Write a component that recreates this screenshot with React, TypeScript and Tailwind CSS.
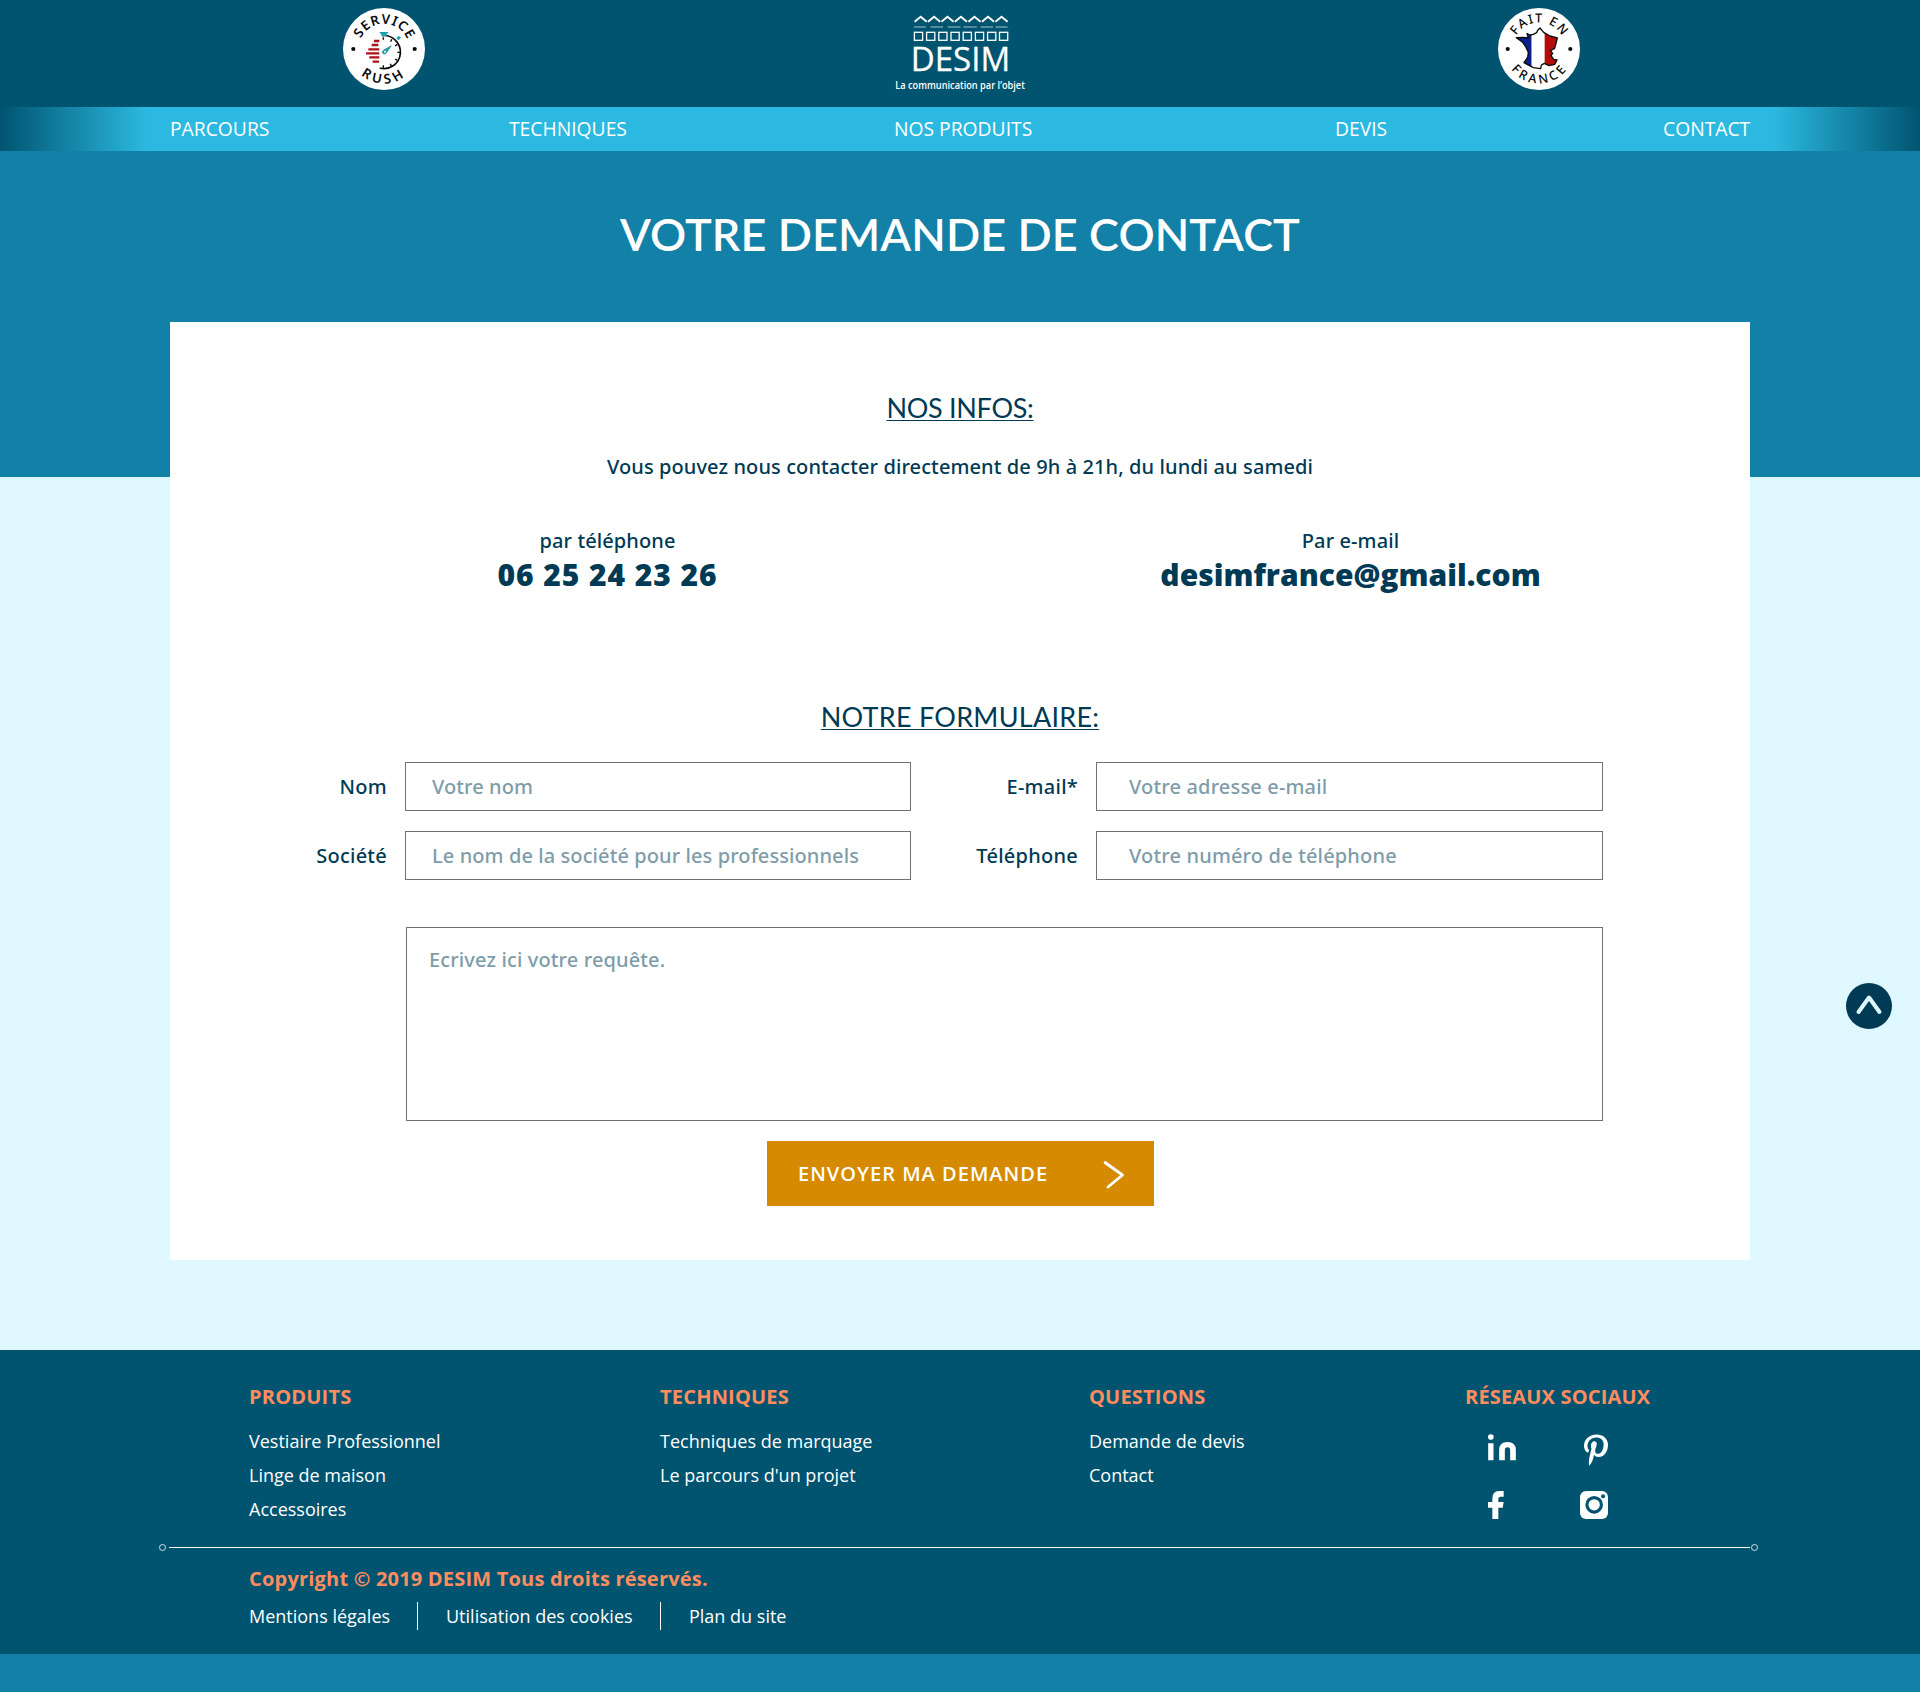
import React from "react";
import { FaPinterestP } from "react-icons/fa";

function RushBadge() {
  return (
    <svg width="82" height="82" viewBox="0 0 82 82" className="mt-2">
      <circle cx="41" cy="41" r="41" fill="#fff" />
      <defs>
        <path id="rush-top" d="M15.700 41a25.300 25.300 0 0 1 50.600 0" />
        <path id="rush-bottom" d="M6.500 41a34.500 34.500 0 0 0 69 0" />
      </defs>
      <g fontFamily="'Noto Sans', sans-serif" fontWeight="600" fontSize="13.300" fill="#0a0a0a" textAnchor="middle">
        <text letterSpacing="1"><textPath href="#rush-top" startOffset="51%">SERVICE</textPath></text>
        <text letterSpacing="3.6"><textPath href="#rush-bottom" startOffset="50%">RUSH</textPath></text>
      </g>
      <circle cx="10.3" cy="41" r="2.1" fill="#0a0a0a" />
      <circle cx="71.7" cy="41" r="2.1" fill="#0a0a0a" />
      <g transform="translate(-23 -8) scale(.33333)" fill="none">
        <path d="M186 107a49.500 49.500 0 1 1-7 97" stroke="#0a0a0a" strokeWidth="5" />
        <path d="M190 112v7M215 118l-3 7M232 133l-7 5M240 157h-8M232 181l-7-4M214 198l-3-7M190 204v-8" stroke="#0a0a0a" strokeWidth="4" />
        <path d="M177 96h29l-6 7v5h-16v-5z" fill="#1c9fae" />
        <path d="M229 115l7-8 7 6-7 8z" fill="#1c9fae" />
        <path d="M214 137l-15 22q-6 6-11 1-4-5 3-10z" fill="#1c9fae" stroke="#0b6f7c" strokeWidth="1.500" />
        <circle cx="195" cy="155" r="3" fill="#fff" />
        <path d="M162 123h16M155 135h20M145 148h33M138 160h40M148 172h30M158 185h19" stroke="#ad1218" strokeWidth="7" />
      </g>
    </svg>
  );
}

function FranceBadge() {
  const outline =
    "M180 84L191 97 207 107 232 114 228 130 224 145 211 152 218 160 213 167 221 178 231 180 224 193 207 197 193 190 184 195 182 206 160 203 132 188 143 172 145 157 137 140 128 127 109 113 130 112 145 114 141 101 150 105 160 103 170 98 173 91Z";
  return (
    <svg width="82" height="82" viewBox="0 0 82 82" className="mt-2">
      <circle cx="41" cy="41" r="41" fill="#fff" />
      <defs>
        <path id="fr-top" d="M14.500 41a26.500 26.500 0 0 1 53 0" />
        <path id="fr-bottom" d="M6.500 41a34.500 34.500 0 0 0 69 0" />
        <clipPath id="fr-clip"><path d={outline} /></clipPath>
      </defs>
      <g fontFamily="'Noto Sans', sans-serif" fontWeight="500" fontSize="12.600" fill="#0a0a0a" textAnchor="middle">
        <text letterSpacing="1.45"><textPath href="#fr-top" startOffset="51%">FAIT EN</textPath></text>
        <text letterSpacing="3.2"><textPath href="#fr-bottom" startOffset="51%">FRANCE</textPath></text>
      </g>
      <circle cx="9.700" cy="41" r="2.1" fill="#0a0a0a" />
      <circle cx="72.300" cy="41" r="2.1" fill="#0a0a0a" />
      <g transform="translate(-18 -8) scale(.33333)">
        <g clipPath="url(#fr-clip)">
          <path d="M100 80h55v130h-55z" fill="#0c1f8f" />
          <path d="M155 80h39v130h-39z" fill="#fff" />
          <path d="M194 80h45v130h-45z" fill="#b50b0b" />
        </g>
        <path d={outline} fill="none" stroke="#0a0a0a" strokeWidth="4" strokeLinejoin="round" />
      </g>
    </svg>
  );
}

const roofs = [920.2, 933.6, 947, 960.4, 974, 987.5, 1001];
const windows = [913.9, 926.1, 938.3, 950.5, 962.7, 974.9, 987.1, 999];

function Logo() {
  return (
    <svg width="132" height="107" viewBox="895.500 0 132 107" className="overflow-visible">
      <g fill="none" stroke="#fff">
        {roofs.map((x) => (
          <path key={x} d={`M${x - 6.1} 21.800L${x} 16.800 ${x + 6.1} 21.800`} strokeWidth="1.900" />
        ))}
        <path d="M913.500 27h12M930 27h12.500M947 27h13M963 27h13.500M980 27h12.500M995 27h12" strokeWidth="1.100" opacity=".65" />
        {windows.map((x) => (
          <rect key={x} x={x} y="32.300" width="8.200" height="8" strokeWidth="1.300" />
        ))}
      </g>
      <text x="910.200" y="71" fill="#fff" stroke="#fff" strokeWidth=".3" fontFamily="'Open Sans', sans-serif" fontSize="33.500" textLength="99.500" lengthAdjust="spacingAndGlyphs">DESIM</text>
      <text x="894.800" y="88.700" fill="#fff" fontFamily="'Open Sans', sans-serif" fontWeight="600" fontSize="11.300" textLength="129.500" lengthAdjust="spacingAndGlyphs">La communication par l’objet</text>
    </svg>
  );
}

function Field({ label, placeholder, wide }: { label: string; placeholder: string; wide?: boolean }) {
  return (
    <>
      <label className="pr-[18px] text-right leading-7 tracking-[0.25px]">{label}</label>
      <input
        placeholder={placeholder}
        className={`${wide ? "pl-8 tracking-[0.16px]" : "pl-[26px] tracking-[0.09px]"} h-[49px] w-full border border-[#707070] bg-white leading-7 outline-none placeholder:text-[#7f9ca9]`}
      />
    </>
  );
}

function FooterColumn({ title, links }: { title: string; links: string[] }) {
  return (
    <div>
      <h3 className="text-xl leading-7 font-bold tracking-[0.2px] text-[#ff8c5f]">{title}</h3>
      <ul className="mt-[13px] text-lg leading-[34px]">
        {links.map((l) => (
          <li key={l}>{l}</li>
        ))}
      </ul>
    </div>
  );
}

function LinkedinIcon() {
  return (
    <svg width="28" height="27" viewBox="144.500 253 84 81" fill="#fff">
      <circle cx="153" cy="262" r="8.500" />
      <path d="M145 281h16v51h-16zM178 332v-31q0-24 25-24t25 24v31h-17v-31q0-8-8-8t-8 8v31z" />
    </svg>
  );
}

function FacebookIcon() {
  return (
    <svg width="16" height="28" viewBox="143 423 48 84" fill="#fff">
      <path d="M156 507v-34h-13v-17h13v-10q0-23 20-23h14v17h-9q-7 0-7 7v9h16l-3 17h-13v34z" />
    </svg>
  );
}

function InstagramIcon() {
  return (
    <svg width="28" height="28" viewBox="418 424 85 85" className="justify-self-end">
      <rect x="418" y="424" width="85" height="85" rx="18" fill="#fff" />
      <circle cx="461" cy="466" r="22" fill="#fff" stroke="#005470" strokeWidth="9.500" />
      <circle cx="488" cy="440" r="6" fill="#005470" />
    </svg>
  );
}

export default function App() {
  return (
    <div className="relative h-[1692px] w-[1920px] bg-[#1380a8] font-['Open_Sans',sans-serif] text-white">
      <header className="flex h-[107px] justify-between bg-[#005470] pr-[340px] pl-[343px]">
        <RushBadge />
        <Logo />
        <FranceBadge />
      </header>

      <nav className="grid h-11 grid-cols-[339px_385px_441px_328px_auto] bg-[linear-gradient(90deg,#005470_0,#2bb9e1_147px,#2bb9e1_1773px,#005470_1920px)] pl-[170px] text-[19.3px] leading-[43px]">
        <a>PARCOURS</a>
        <a>TECHNIQUES</a>
        <a>NOS PRODUITS</a>
        <a>DEVIS</a>
        <a>CONTACT</a>
      </nav>

      <main className="h-[1199px] bg-[linear-gradient(#1380a8_326px,#dff7ff_326px)] pt-14 font-['Noto_Sans','Open_Sans',sans-serif]">
        <h1 className="h-[115px] text-center font-[Lato] text-[45px] leading-[54px] font-semibold tracking-[0.08px]">VOTRE DEMANDE DE CONTACT</h1>

        <section className="mx-auto h-[938px] w-[1580px] bg-white pt-[70px] text-xl font-medium tracking-[0.1px] text-[#003a54]">
          <h2 className="text-center font-[Lato] text-[27px] leading-8 font-normal tracking-[-0.3px] underline decoration-1 underline-offset-2">NOS INFOS:</h2>
          <p className="mt-[29px] text-center leading-7">Vous pouvez nous contacter directement de 9h à 21h, du lundi au samedi</p>
          <div className="mt-[46px] grid grid-cols-[875px_611px] text-center leading-7">
            <div>
              <p>par téléphone</p>
              <p className="font-['Open_Sans'] text-3xl leading-10 font-extrabold tracking-[0.92px]">06 25 24 23 26</p>
            </div>
            <div>
              <p>Par e-mail</p>
              <p className="font-['Open_Sans'] text-3xl leading-10 font-extrabold tracking-normal">desimfrance@gmail.com</p>
            </div>
          </div>

          <h2 className="mt-[106px] text-center font-[Lato] text-[27px] leading-8 font-normal tracking-[0.25px] underline decoration-1 underline-offset-2">NOTRE FORMULAIRE:</h2>
          <form className="mt-[29px]">
            <div className="grid grid-cols-[235px_506px_185px_507px] items-center gap-y-5">
              <Field label="Nom" placeholder="Votre nom" />
              <Field label="E-mail*" placeholder="Votre adresse e-mail" wide />
              <Field label="Société" placeholder="Le nom de la société pour les professionnels" />
              <Field label="Téléphone" placeholder="Votre numéro de téléphone" wide />
            </div>
            <textarea
              placeholder="Ecrivez ici votre requête."
              className="mt-[47px] ml-[236px] block h-[194px] w-[1197px] resize-none border border-[#707070] pt-[18px] pl-[22px] leading-7 tracking-[0.13px] outline-none placeholder:text-[#7f9ca9]"
            />
            <button type="button" className="mt-5 ml-[597px] flex h-[65px] w-[387px] items-center justify-between bg-[#d68a00] pr-[29px] pl-[31px] font-['Open_Sans'] font-semibold tracking-[1.02px] text-white">
              ENVOYER MA DEMANDE
              <svg width="22" height="30" viewBox="0 0 22 30" className="mt-0.5" fill="none" stroke="#fff" strokeWidth="2.800" strokeLinecap="round" strokeLinejoin="round">
                <path d="M2 2.500L19.500 15 5 27" />
              </svg>
            </button>
          </form>
        </section>
      </main>

      <footer className="h-[304px] bg-[#005470]">
        <div className="grid h-[194px] grid-cols-[411px_429px_376px_auto] pt-[33px] pl-[249px]">
          <FooterColumn title="PRODUITS" links={["Vestiaire Professionnel", "Linge de maison", "Accessoires"]} />
          <FooterColumn title="TECHNIQUES" links={["Techniques de marquage", "Le parcours d'un projet"]} />
          <FooterColumn title="QUESTIONS" links={["Demande de devis", "Contact"]} />
          <div>
            <h3 className="text-xl leading-7 font-bold tracking-[0.18px] text-[#ff8c5f]">RÉSEAUX SOCIAUX</h3>
            <div className="mt-[23px] ml-[23px] grid w-[120px] grid-cols-2 gap-y-[25px]">
              <LinkedinIcon />
              <FaPinterestP className="h-8 w-6 justify-self-end" />
              <FacebookIcon />
              <InstagramIcon />
            </div>
          </div>
        </div>
        <div className="ml-[159px] flex w-[1599px] items-center">
          <span className="size-[7px] rounded-full border border-white/80" />
          <span className="mr-px ml-[3px] h-px grow bg-white" />
          <span className="size-[7px] rounded-full border border-white/80" />
        </div>
        <p className="mt-3.5 pl-[249px] text-xl leading-7 font-bold tracking-[0.2px] text-[#ff8c5f]">Copyright © 2019 DESIM Tous droits réservés.</p>
        <div className="mt-[9px] flex pl-[249px] text-lg leading-7">
          <a className="w-[169px] border-r border-white">Mentions légales</a>
          <a className="w-[243px] border-r border-white pl-7">Utilisation des cookies</a>
          <a className="pl-7">Plan du site</a>
        </div>
      </footer>

      <button className="absolute top-[983px] left-[1846px] size-[46px] rounded-full bg-[#003a54]">
        <svg width="46" height="46" viewBox="0 0 46 46" fill="none" stroke="#dff7ff" strokeWidth="4" strokeLinecap="round" strokeLinejoin="round">
          <path d="M12.500 29L23 14.500 33.500 29" />
        </svg>
      </button>
    </div>
  );
}
